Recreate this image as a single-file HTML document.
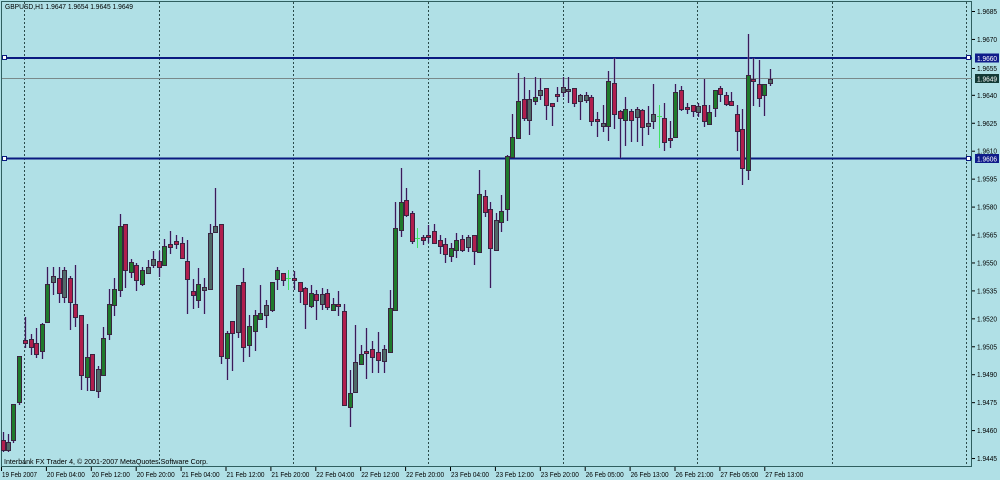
<!DOCTYPE html>
<html><head><meta charset="utf-8"><style>
html,body{margin:0;padding:0;background:#b0e0e6;width:1000px;height:480px;overflow:hidden}
svg{display:block}
text{font-family:"Liberation Sans","DejaVu Sans",sans-serif;font-size:7.5px;fill:#000}
</style></head><body>
<svg id="c" width="1000" height="480" xmlns="http://www.w3.org/2000/svg">
<rect x="0" y="0" width="1000" height="480" fill="#b0e0e6"/>
<g stroke="#2a4a4a" stroke-width="1" stroke-dasharray="2,2">
<line x1="24.5" y1="2" x2="24.5" y2="466"/><line x1="159.5" y1="2" x2="159.5" y2="466"/>
<line x1="293.5" y1="2" x2="293.5" y2="466"/><line x1="428.5" y1="2" x2="428.5" y2="466"/>
<line x1="563.5" y1="2" x2="563.5" y2="466"/><line x1="697.5" y1="2" x2="697.5" y2="466"/>
<line x1="832.5" y1="2" x2="832.5" y2="466"/><line x1="966.5" y1="2" x2="966.5" y2="466"/>
</g>
<rect x="1.5" y="1.5" width="970" height="465" fill="none" stroke="#2f5f5f" stroke-width="1"/>
<line x1="2" y1="78.5" x2="972" y2="78.5" stroke="#7a8a8a" stroke-width="1"/>
<line x1="2" y1="58" x2="972" y2="58" stroke="#0a1a80" stroke-width="2"/>
<line x1="2" y1="158.5" x2="972" y2="158.5" stroke="#0a1a80" stroke-width="2"/>
<rect x="2.5" y="55.5" width="4" height="4" fill="#fff" stroke="#0a1a80"/>
<rect x="966.5" y="55.5" width="4" height="4" fill="#fff" stroke="#0a1a80"/>
<rect x="2.5" y="156.5" width="4" height="4" fill="#fff" stroke="#0a1a80"/>
<rect x="966.5" y="156.5" width="4" height="4" fill="#fff" stroke="#0a1a80"/>
<g id="cd"></g>
<text x="5" y="9" textLength="128" lengthAdjust="spacingAndGlyphs">GBPUSD,H1  1.9647 1.9654 1.9645 1.9649</text>
<text x="4" y="464" textLength="204" lengthAdjust="spacingAndGlyphs">Interbank FX Trader 4, © 2001-2007 MetaQuotes Software Corp.</text>
<g id="ax"></g>
</svg>
<script>
var D=[[3,432,452,440,450,'r'],[8,434,452,442,450,'g'],[13,404,443,404,440,'b'],[19,356,405,356,402,'b'],[25,317,348,340,343,'r'],[31,334,355,339,347,'r'],[36,328,358,343,354,'r'],[42,323,359,324,351,'b'],[47,267,322,284,322,'b'],[53,267,295,276,282,'g'],[59,267,303,278,293,'r'],[64,267,303,270,297,'g'],[70,276,330,278,302,'r'],[75,265,327,304,317,'r'],[81,315,390,315,375,'r'],[87,324,391,357,377,'b'],[92,354,390,354,390,'r'],[98,366,398,369,391,'g'],[103,327,375,338,375,'b'],[109,289,340,304,334,'b'],[114,278,316,289,305,'b'],[120,214,297,226,290,'b'],[125,224,288,224,270,'r'],[131,259,278,262,272,'b'],[136,263,291,265,280,'r'],[142,267,286,270,284,'b'],[148,260,273,267,273,'g'],[153,251,268,259,265,'g'],[159,251,277,261,267,'r'],[164,239,266,246,265,'b'],[170,231,254,244,247,'r'],[176,235,249,241,244,'r'],[182,237,258,243,258,'r'],[187,240,314,261,279,'r'],[193,279,309,291,295,'r'],[198,268,308,284,300,'b'],[204,278,314,287,290,'g'],[210,224,289,233,289,'g'],[215,188,233,226,232,'g'],[221,224,364,224,356,'r'],[227,331,380,333,358,'b'],[232,321,371,321,333,'r'],[238,285,338,285,332,'g'],[243,268,362,282,347,'r'],[249,315,357,326,345,'b'],[255,310,351,315,331,'b'],[260,285,320,313,319,'b'],[266,300,328,305,315,'g'],[272,282,312,282,310,'b'],[277,267,290,270,279,'b'],[283,273,286,273,280,'r'],[288,270,290,278,279,'l'],[294,271,290,278,280,'r'],[300,282,303,282,291,'r'],[305,287,329,288,304,'r'],[311,285,308,293,306,'b'],[316,290,320,294,300,'r'],[322,288,310,294,304,'g'],[327,289,310,293,307,'r'],[333,298,310,304,310,'b'],[338,291,316,304,306,'r'],[344,304,405,311,405,'r'],[350,370,427,393,407,'b'],[355,325,393,362,392,'g'],[361,345,364,354,364,'b'],[366,328,379,351,353,'r'],[372,341,373,349,357,'r'],[378,332,373,352,360,'r'],[384,345,373,349,361,'g'],[390,290,352,308,352,'b'],[395,202,310,228,310,'b'],[401,168,237,202,230,'b'],[406,188,217,200,215,'r'],[412,211,244,213,241,'r'],[417,228,248,238,240,'l'],[423,235,245,237,240,'r'],[428,225,243,235,237,'r'],[434,224,244,231,243,'r'],[440,235,254,240,246,'r'],[445,238,263,244,254,'r'],[451,243,262,248,256,'b'],[456,233,258,240,250,'b'],[462,235,252,239,250,'r'],[468,235,252,237,247,'g'],[474,235,265,235,251,'r'],[479,170,252,194,252,'b'],[485,190,217,196,212,'r'],[490,202,288,209,248,'r'],[496,213,251,220,250,'g'],[501,195,232,211,222,'b'],[507,155,221,156,209,'b'],[512,114,158,137,157,'b'],[518,73,138,101,138,'b'],[524,77,121,99,118,'r'],[529,90,135,99,120,'g'],[535,77,105,97,101,'b'],[540,78,100,90,95,'g'],[546,88,120,88,105,'r'],[552,103,126,103,106,'r'],[557,87,102,94,96,'r'],[563,77,97,87,92,'g'],[568,77,103,89,91,'g'],[574,88,107,88,103,'r'],[580,94,120,95,101,'g'],[586,92,103,95,100,'g'],[591,95,126,97,121,'r'],[597,112,137,119,121,'r'],[603,105,132,123,126,'g'],[608,71,141,81,126,'b'],[614,58,129,83,114,'r'],[620,110,158,111,118,'r'],[625,97,146,109,120,'b'],[631,109,142,111,120,'r'],[637,107,142,109,117,'g'],[642,109,146,110,127,'r'],[648,106,135,123,126,'g'],[653,84,129,114,121,'g'],[659,105,148,116,117,'l'],[664,103,151,118,142,'r'],[670,121,148,138,140,'r'],[675,84,138,92,137,'b'],[681,86,111,90,109,'r'],[687,103,114,107,109,'r'],[693,105,117,105,111,'r'],[698,103,117,106,112,'g'],[704,79,127,105,121,'r'],[709,105,125,112,124,'b'],[715,90,117,90,108,'b'],[720,86,102,88,94,'r'],[726,92,106,95,104,'r'],[731,92,106,101,105,'r'],[737,105,151,114,131,'r'],[742,109,185,129,168,'r'],[748,34,180,75,170,'b'],[753,58,106,79,81,'r'],[759,60,107,84,98,'r'],[764,84,116,84,95,'b'],[770,69,86,79,83,'g']];
var C={b:'#1f7a2c',r:'#b01f4e',g:'#4f6a68'};
var s='';
D.forEach(function(d){var x=d[0],t=d[5];
if(t=='l'){s+='<line x1="'+(x+.5)+'" y1="'+d[1]+'" x2="'+(x+.5)+'" y2="'+d[2]+'" stroke="#40e060"/><line x1="'+(x-2)+'" y1="'+(d[3]+.5)+'" x2="'+(x+3)+'" y2="'+(d[3]+.5)+'" stroke="#40e060"/>';return;}
s+='<line x1="'+(x+.5)+'" y1="'+d[1]+'" x2="'+(x+.5)+'" y2="'+d[2]+'" stroke="#8a82b0" stroke-width="2.2" opacity=".55"/>';
s+='<line x1="'+(x+.5)+'" y1="'+d[1]+'" x2="'+(x+.5)+'" y2="'+d[2]+'" stroke="#3a1a5a"/>';
var h=Math.max(d[4]-d[3],2);
s+='<rect x="'+(x-1.5)+'" y="'+(d[3]+.5)+'" width="4" height="'+h+'" fill="'+C[t]+'" stroke="#3a2440" stroke-width="1"/>';});
document.getElementById('cd').innerHTML=s;
var a='';
var P=['1.9685','1.9670','1.9655','1.9640','1.9625','1.9610','1.9595','1.9580','1.9565','1.9550','1.9535','1.9520','1.9505','1.9490','1.9475','1.9460','1.9445'];
P.forEach(function(p,i){var y=11+i*27.94;if(p=='1.9655')y=68;
a+='<line x1="972" y1="'+(y+.5)+'" x2="975" y2="'+(y+.5)+'" stroke="#000"/><text x="977" y="'+(y+3)+'" textLength="20" lengthAdjust="spacingAndGlyphs">'+p+'</text>';});
function box(y,c,t){a+='<rect x="975" y="'+(y-4.5)+'" width="24" height="9" fill="'+c+'"/><text x="977" y="'+(y+3)+'" textLength="20" lengthAdjust="spacingAndGlyphs" style="fill:#fff">'+t+'</text>';}
box(58,'#101c8a','1.9660');box(78.5,'#143a36','1.9649');box(158.5,'#101c8a','1.9606');
var T=['19 Feb 2007','20 Feb 04:00','20 Feb 12:00','20 Feb 20:00','21 Feb 04:00','21 Feb 12:00','21 Feb 20:00','22 Feb 04:00','22 Feb 12:00','22 Feb 20:00','23 Feb 04:00','23 Feb 12:00','23 Feb 20:00','26 Feb 05:00','26 Feb 13:00','26 Feb 21:00','27 Feb 05:00','27 Feb 13:00'];
T.forEach(function(t,i){var x=i*44.9;var L=i==0?35:38;a+='<line x1="'+(x+1.5)+'" y1="467" x2="'+(x+1.5)+'" y2="471" stroke="#000"/><text x="'+(x+2)+'" y="477" textLength="'+L+'" lengthAdjust="spacingAndGlyphs">'+t+'</text>';});
document.getElementById('ax').innerHTML=a;
</script>
</body></html>
